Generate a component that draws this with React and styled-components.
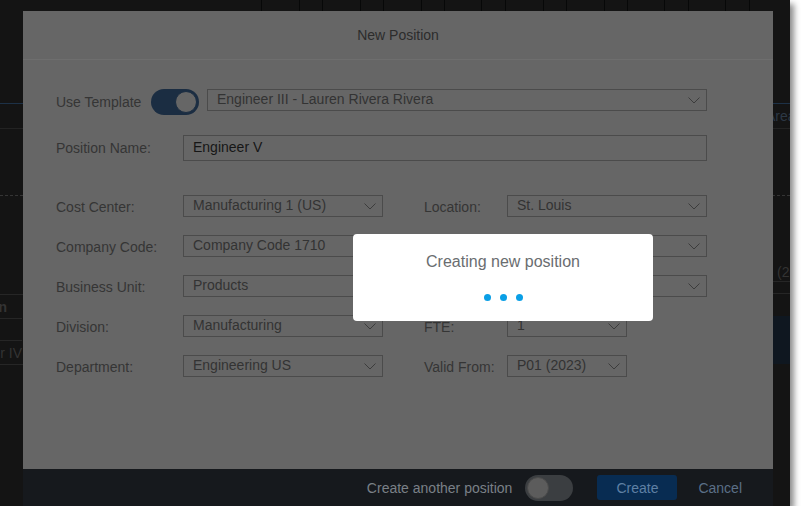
import React from "react";
import styled, { createGlobalStyle } from "styled-components";

const GlobalStyle = createGlobalStyle`
  html, body {
    margin: 0;
    padding: 0;
    background: #ffffff;
    font-family: "Liberation Sans", Arial, sans-serif;
  }
`;

const Frame = styled.div`
  position: relative;
  width: 790px;
  height: 506px;
  background: #141414;
  overflow: hidden;
  box-shadow: 4px 4px 6px rgba(0, 0, 0, 0.45);
`;

/* ---------- dimmed app behind the dialog ---------- */

const Backdrop = styled.div`
  display: flex;
  flex-direction: column;
  height: 100%;
  color: #333333;
  font-size: 14px;
`;

const TopCells = styled.div`
  display: flex;
  height: 11px;
  padding-left: 261px;
`;

const TopCell = styled.div`
  width: ${(p) => p.w}px;
  border-left: 1px solid #070808;
`;

const AreaRow = styled.div`
  margin-top: 92px;
  height: 24px;
  display: flex;
  align-items: center;
  padding-left: 766px;
  border-top: 1px solid #1d3147;
  border-bottom: 1px solid #232323;
  color: #2c3845;
  white-space: nowrap;
`;

const DashedLine = styled.div`
  margin-top: 66px;
  border-top: 1px dashed #353535;
`;

const Tables = styled.div`
  display: flex;
  justify-content: space-between;
`;

const LeftTable = styled.div`
  width: 60px;
  padding-top: 98px;
  display: flex;
  flex-direction: column;
`;

const RightTable = styled.div`
  width: 40px;
  padding-top: 65px;
  display: flex;
  flex-direction: column;
`;

const BgRow = styled.div`
  height: ${(p) => p.h}px;
  display: flex;
  align-items: center;
  justify-content: ${(p) => (p.end ? "flex-end" : "flex-start")};
  width: ${(p) => (p.end ? `${p.end}px` : "auto")};
  padding-left: ${(p) => (p.end ? 0 : 27)}px;
  border-top: 1px solid ${(p) => (p.line ? "#262626" : "transparent")};
  background: ${(p) => p.bg || "transparent"};
  font-weight: ${(p) => (p.bold ? 700 : 400)};
  white-space: nowrap;
`;

const BgLine = styled.div`
  border-top: 1px solid #262626;
  width: 60px;
`;

/* ---------- dialog ---------- */

const Dialog = styled.div`
  position: absolute;
  left: 23px;
  top: 11px;
  width: 750px;
  height: 495px;
  background: #666666;
  display: flex;
  flex-direction: column;
`;

const Header = styled.div`
  height: 48px;
  display: flex;
  align-items: center;
  justify-content: center;
  border-bottom: 1px solid #6e6e6e;
  font-size: 14px;
  color: #2c2c2c;
`;

const Body = styled.div`
  flex: 1;
  padding: 29px 66px 0 33px;
  display: flex;
  flex-direction: column;
`;

const TemplateRow = styled.div`
  display: flex;
  align-items: flex-start;
`;

const Label = styled.div`
  width: ${(p) => p.w}px;
  height: ${(p) => p.lh || 22}px;
  flex-shrink: 0;
  box-sizing: border-box;
  line-height: ${(p) => (p.lh || 22) - (p.pt || 0)}px;
  padding-top: ${(p) => p.pt || 0}px;
  font-size: 14px;
  color: #353535;
  white-space: nowrap;
`;

const Switch = styled.div`
  width: 48px;
  height: 26px;
  box-sizing: border-box;
  border-radius: 13px;
  background: ${(p) => (p.on ? "#1b2d42" : "#3b3e41")};
  display: flex;
  align-items: center;
  justify-content: ${(p) => (p.on ? "flex-end" : "flex-start")};
  padding: 0 2px;
  flex-shrink: 0;
`;

const Knob = styled.div`
  width: 22px;
  height: 22px;
  border-radius: 50%;
  box-sizing: border-box;
  background: ${(p) => (p.on ? "#666666" : "#5c5c5c")};
  border: 1px solid ${(p) => (p.on ? "#1b2d42" : "#4a4a4a")};
`;

const Box = styled.div`
  width: ${(p) => (p.w ? `${p.w}px` : "auto")};
  flex: ${(p) => (p.w ? "none" : 1)};
  height: ${(p) => p.h || 22}px;
  box-sizing: border-box;
  margin-left: ${(p) => p.ml || 0}px;
  border: 1px solid #4b4b4b;
  display: flex;
  align-items: center;
  padding: 0 6px 0 9px;
  font-size: 14px;
  color: ${(p) => (p.strong ? "#161616" : "#333333")};
  white-space: nowrap;
  overflow: hidden;
`;

const Value = styled.span`
  flex: 1;
  padding-bottom: 2px;
`;

const NameRow = styled.div`
  display: flex;
  align-items: center;
  margin-top: 20px;
`;

const FieldGrid = styled.div`
  margin-top: 34px;
  display: grid;
  grid-template-columns: 327px 324px;
  column-gap: 41px;
  row-gap: 18px;
`;

const Field = styled.div`
  display: flex;
  align-items: flex-start;
`;

/* ---------- footer ---------- */

const Footer = styled.div`
  height: 37px;
  background: #16191d;
  display: flex;
  align-items: center;
  justify-content: flex-end;
  padding-right: 31px;
  font-size: 14px;
`;

const FooterText = styled.span`
  color: #7a8087;
  margin-right: 13px;
`;

const CreateButton = styled.div`
  width: 80px;
  height: 25px;
  margin-left: 24px;
  margin-right: 21px;
  border-radius: 3px;
  background: #082c52;
  color: #5f80a4;
  display: flex;
  align-items: center;
  justify-content: center;
`;

const CancelButton = styled.div`
  color: #5b6f87;
`;

/* ---------- busy popup ---------- */

const Busy = styled.div`
  position: absolute;
  left: 353px;
  top: 234px;
  width: 300px;
  height: 87px;
  box-sizing: border-box;
  background: #ffffff;
  border-radius: 4px;
  display: flex;
  flex-direction: column;
  align-items: center;
  padding-top: 18px;
`;

const BusyText = styled.div`
  font-size: 16px;
  line-height: 20px;
  color: #6a6d70;
`;

const Dots = styled.div`
  display: flex;
  gap: 9px;
  margin-top: 22px;
`;

const Dot = styled.span`
  width: 7px;
  height: 7px;
  border-radius: 50%;
  background: #0a9fe6;
`;

const Chevron = () => (
  <svg width="12" height="7" viewBox="0 0 12 7">
    <polyline points="0.5,0.5 6,6 11.5,0.5" fill="none" stroke="#3c3c3c" strokeWidth="1" />
  </svg>
);

const Select = ({ value, w, ml }) => (
  <Box w={w} ml={ml}>
    <Value>{value}</Value>
    <Chevron />
  </Box>
);

const topCellWidths = [37, 22, 37, 22, 37, 22, 36, 23, 37, 22, 37, 22, 36, 23, 36, 23, 40];

const fields = [
  ["Cost Center:", "Manufacturing 1 (US)", 200, "Location:", "St. Louis", 200],
  ["Company Code:", "Company Code 1710", 200, "Job Type:", "Technical", 200],
  ["Business Unit:", "Products", 200, "Class:", "Regular", 200],
  ["Division:", "Manufacturing", 200, "FTE:", "1", 120],
  ["Department:", "Engineering US", 200, "Valid From:", "P01 (2023)", 120],
];

export default function App() {
  return (
    <>
      <GlobalStyle />
      <Frame>
        <Backdrop>
          <TopCells>
            {topCellWidths.map((w, i) => (
              <TopCell key={i} w={w} />
            ))}
          </TopCells>
          <AreaRow>Area</AreaRow>
          <DashedLine />
          <Tables>
            <LeftTable>
              <BgLine />
              <BgRow h={22} bold end={7}>Position</BgRow>
              <BgRow h={21} line end={22} />
              <BgRow h={23} line end={22}>Engineer IV</BgRow>
              <BgLine />
            </LeftTable>
            <RightTable>
              <BgRow h={19}>(2023)</BgRow>
              <BgRow h={11} line />
              <BgRow h={22} line />
              <BgRow h={47} bg="#0f1720" />
            </RightTable>
          </Tables>
        </Backdrop>

        <Dialog>
          <Header>New Position</Header>
          <Body>
            <TemplateRow>
              <Label w={95} lh={26}>Use Template</Label>
              <Switch on>
                <Knob on />
              </Switch>
              <Select value="Engineer III - Lauren Rivera Rivera" ml={8} />
            </TemplateRow>
            <NameRow>
              <Label w={127}>Position Name:</Label>
              <Box h={26} strong>
                <Value>Engineer V</Value>
              </Box>
            </NameRow>
            <FieldGrid>
              {fields.map(([l1, v1, w1, l2, v2, w2]) => (
                <React.Fragment key={l1}>
                  <Field>
                    <Label w={127} pt={2}>{l1}</Label>
                    <Select value={v1} w={w1} />
                  </Field>
                  <Field>
                    <Label w={83} pt={2}>{l2}</Label>
                    <Select value={v2} w={w2} />
                  </Field>
                </React.Fragment>
              ))}
            </FieldGrid>
          </Body>
          <Footer>
            <FooterText>Create another position</FooterText>
            <Switch>
              <Knob />
            </Switch>
            <CreateButton>Create</CreateButton>
            <CancelButton>Cancel</CancelButton>
          </Footer>
        </Dialog>

        <Busy>
          <BusyText>Creating new position</BusyText>
          <Dots>
            <Dot />
            <Dot />
            <Dot />
          </Dots>
        </Busy>
      </Frame>
    </>
  );
}
